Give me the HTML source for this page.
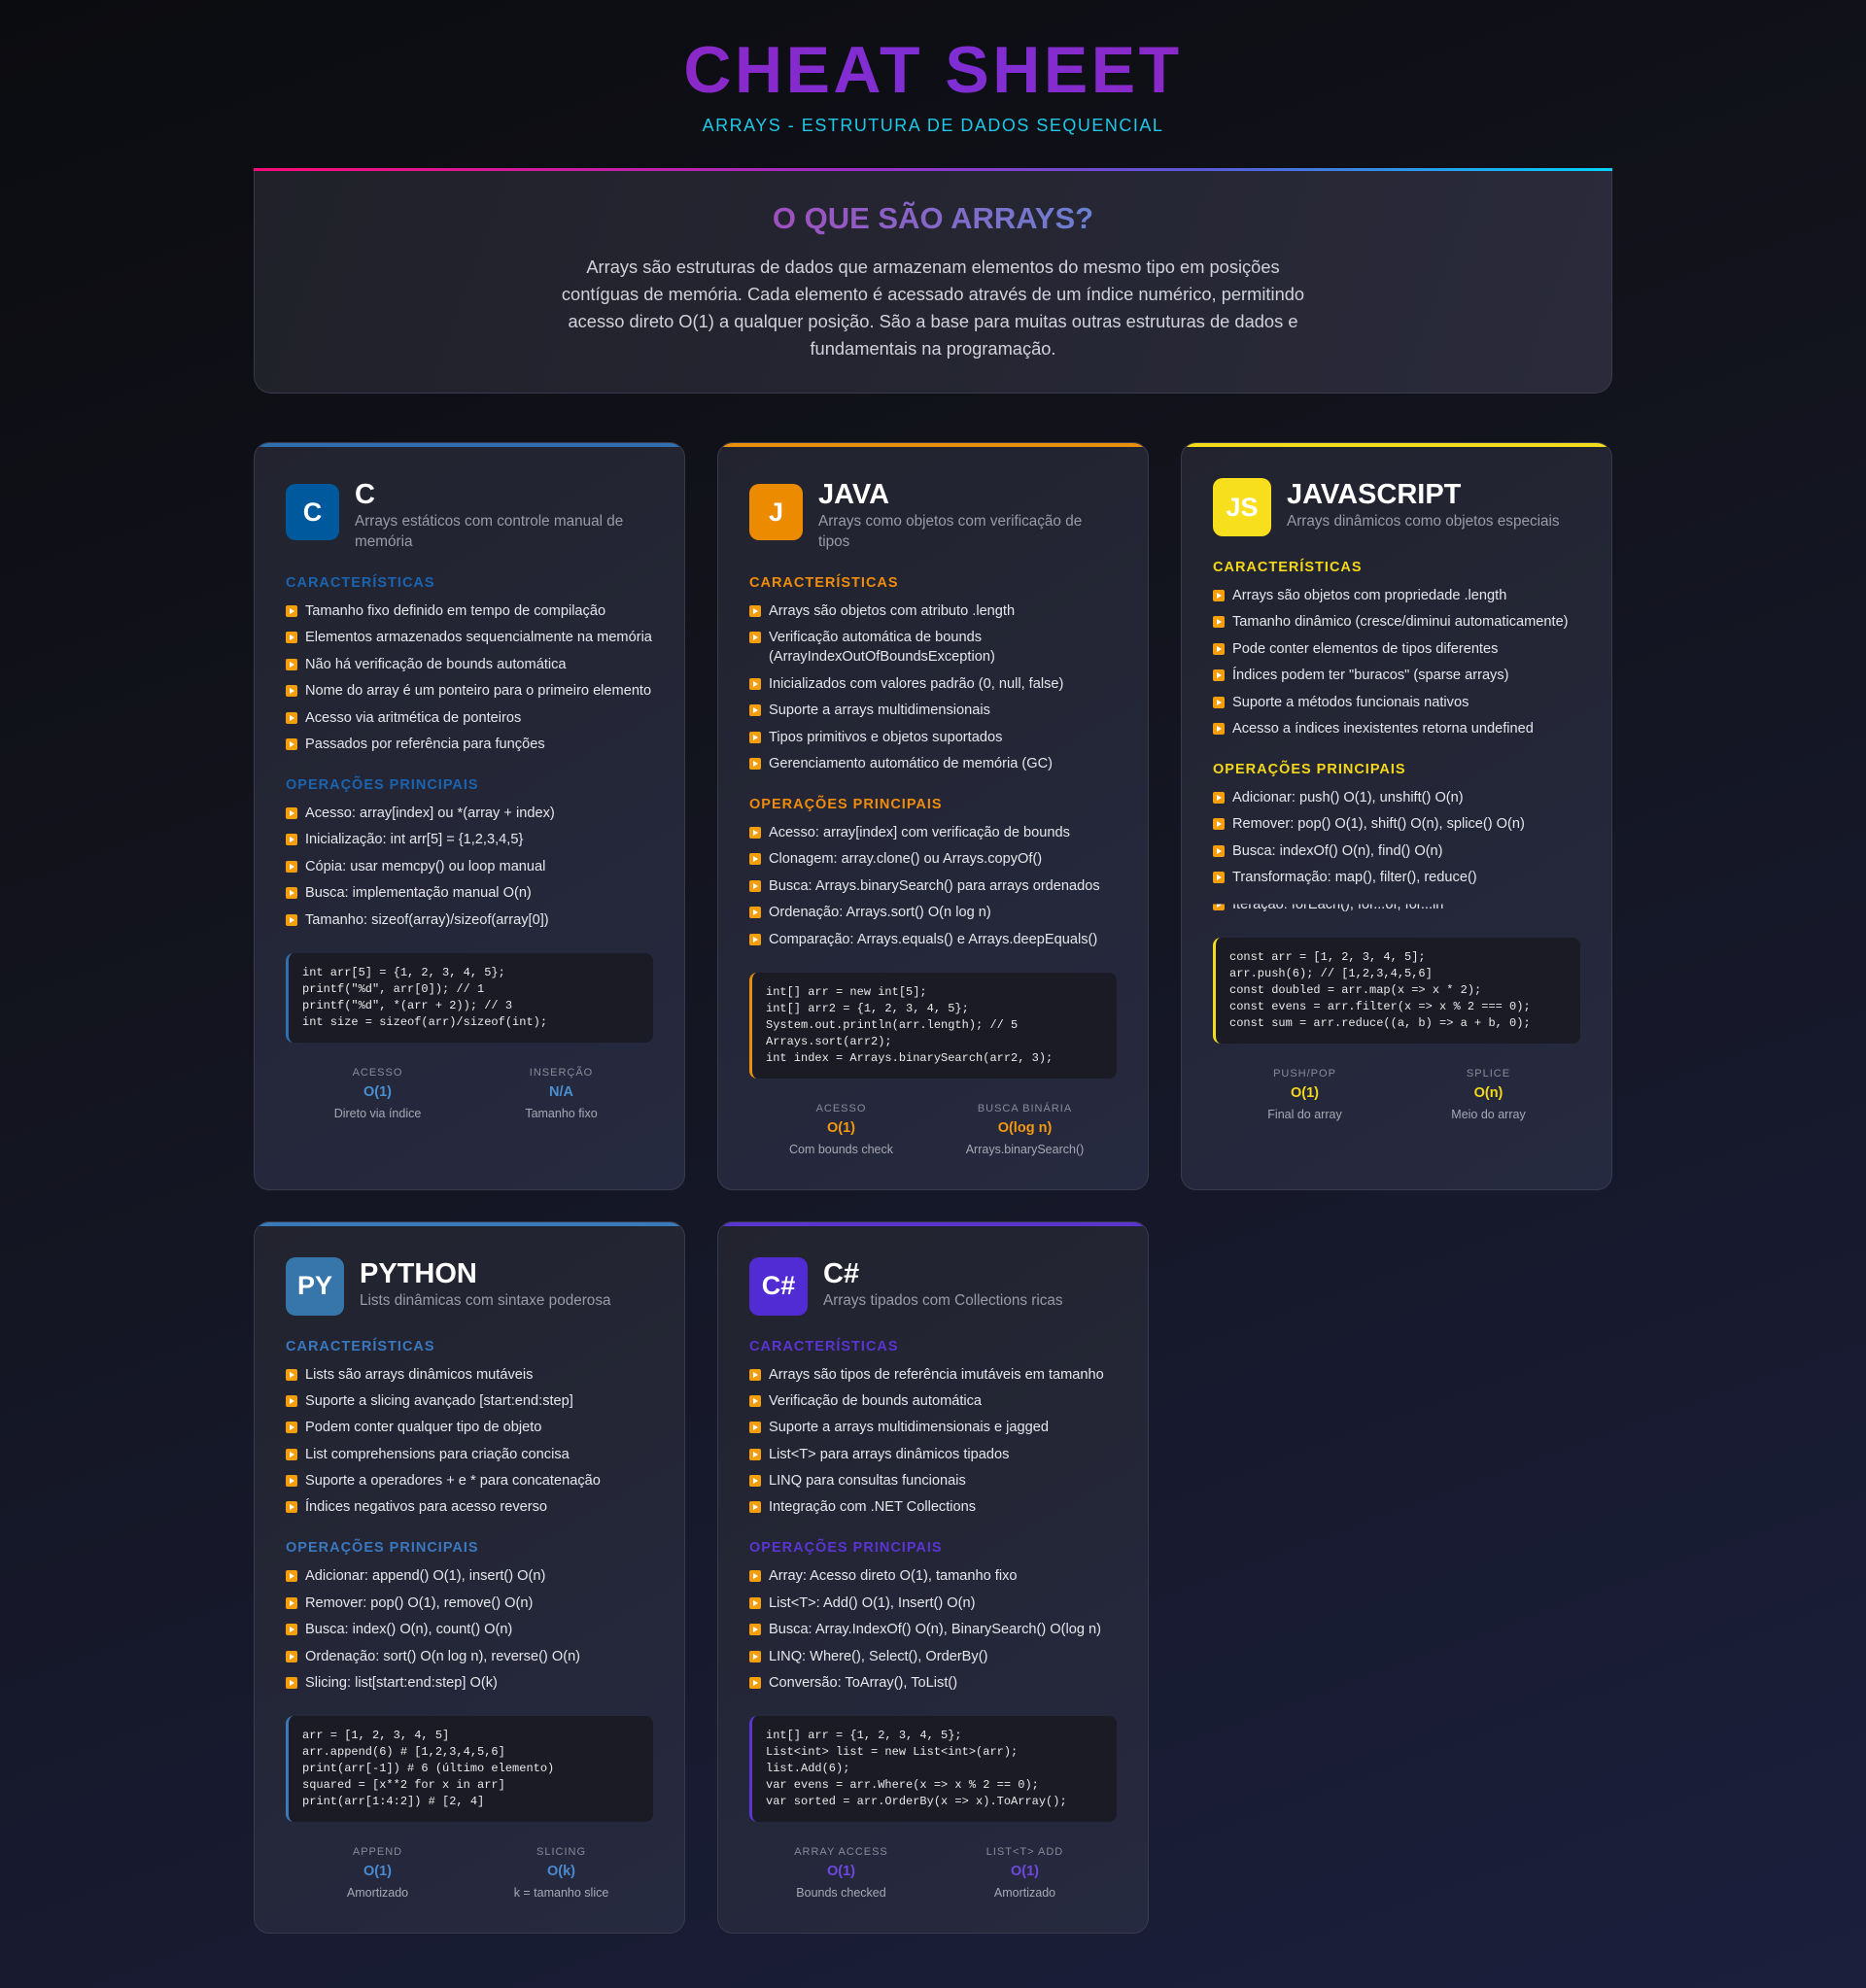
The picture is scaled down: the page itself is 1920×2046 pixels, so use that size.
<!DOCTYPE html>
<html><head><meta charset="utf-8">
<style>
*{box-sizing:border-box;margin:0;padding:0}
html,body{width:1920px;height:2046px;overflow:hidden}
body{font-family:"Liberation Sans",sans-serif;color:#e4e4ea;background:linear-gradient(160deg,#0b0c10 0%,#12131c 35%,#171a2e 70%,#1b1f3c 100%);}
.wrap{width:1398px;margin:0 auto;padding-top:34px}
h1{text-align:center;font-size:68px;font-weight:bold;letter-spacing:3.5px;line-height:76px;background:linear-gradient(90deg,#a21caf,#7e2fd6 50%,#a21caf);-webkit-background-clip:text;background-clip:text;color:transparent}
.sub{text-align:center;color:#1fc8e8;font-size:18px;letter-spacing:1.5px;line-height:22px;margin-top:8px;font-weight:500}
.intro{margin-top:33px;position:relative;border:1px solid #3a3b4a;border-top:none;border-radius:0 0 18px 18px;background:linear-gradient(110deg,#202129,#2a2a3b);height:232px;padding-top:32px;text-align:center}
.intro:before{content:"";position:absolute;left:-1px;right:-1px;top:0;height:3px;background:linear-gradient(90deg,#ff0a78,#9b2fc9 45%,#5a5ad8 70%,#00d4ff)}
.intro h2{font-size:31px;line-height:40px;font-weight:bold;display:inline-block;background:linear-gradient(90deg,#a04fbf,#6a80d0);-webkit-background-clip:text;background-clip:text;color:transparent}
.intro p{width:790px;margin:16px auto 0;font-size:18.3px;line-height:28px;color:#d2d2da}
.grid{display:grid;grid-template-columns:444px 444px 444px;column-gap:33px;row-gap:32px;margin-top:50px}
.card{position:relative;background:linear-gradient(150deg,#22232e,#262a40);border:1px solid #393b4d;border-radius:16px;padding:36px 32px 32px;overflow:hidden}
.card:before{content:"";position:absolute;left:0;right:0;top:0;height:4px;background:var(--b)}
.hd{display:flex;align-items:flex-start}
.ic{height:58px;min-width:55px;padding:0 9px;border-radius:10px;background:var(--i);display:flex;align-items:center;justify-content:center;font-weight:bold;font-size:27px;color:#fff;margin-top:6px;margin-right:16px}
.tt{font-size:29px;font-weight:bold;line-height:34px;color:#fff}
.ds{font-size:15.3px;line-height:21px;color:#9a9aa8}
.sec{font-size:14.5px;font-weight:bold;letter-spacing:1px;color:var(--h);line-height:20px;margin-top:22px}
ul{list-style:none;margin-top:9px}
li{position:relative;padding-left:20px;font-size:14.6px;line-height:20px;margin-bottom:7.4px;color:#e6e6ec}
li:before{content:"";position:absolute;left:0;top:4px;width:12px;height:12px;border-radius:2px;background:#f59e0b}
li:after{content:"";position:absolute;left:4px;top:7px;border-left:5px solid #fff;border-top:3px solid transparent;border-bottom:3px solid transparent}
.clip{clip-path:inset(10px 0 0 0)}
pre{margin-top:24px;background:#1a1b25;border-left:3px solid var(--b);border-radius:8px;padding:12px 14px;font-family:"Liberation Mono",monospace;font-size:12px;line-height:17px;color:#eaeaea}
.st{display:grid;grid-template-columns:1fr 1fr;margin-top:24px;text-align:center}
.st .l{font-size:11px;letter-spacing:1px;color:#8a8a98;line-height:14px}
.st .v{font-size:14.5px;font-weight:bold;color:var(--v);line-height:20px;margin-top:3px}
.st .d{font-size:12.5px;color:#a8a8b4;line-height:18px;margin-top:3px}
</style></head><body>
<div class="wrap">
<h1>CHEAT SHEET</h1>
<div class="sub">ARRAYS - ESTRUTURA DE DADOS SEQUENCIAL</div>
<div class="intro"><h2>O QUE SÃO ARRAYS?</h2>
<p>Arrays são estruturas de dados que armazenam elementos do mesmo tipo em posições contíguas de memória. Cada elemento é acessado através de um índice numérico, permitindo acesso direto O(1) a qualquer posição. São a base para muitas outras estruturas de dados e fundamentais na programação.</p></div>
<div class="grid">
<div class="card" style="--b:#2f6fb0;--i:#00599c;--h:#1a64b0;--v:#4a8fd0">
<div class="hd"><div class="ic">C</div><div><div class="tt">C</div><div class="ds">Arrays estáticos com controle manual de memória</div></div></div>
<div class="sec">CARACTERÍSTICAS</div>
<ul><li>Tamanho fixo definido em tempo de compilação</li><li>Elementos armazenados sequencialmente na memória</li><li>Não há verificação de bounds automática</li><li>Nome do array é um ponteiro para o primeiro elemento</li><li>Acesso via aritmética de ponteiros</li><li>Passados por referência para funções</li></ul>
<div class="sec">OPERAÇÕES PRINCIPAIS</div>
<ul><li>Acesso: array[index] ou *(array + index)</li><li>Inicialização: int arr[5] = {1,2,3,4,5}</li><li>Cópia: usar memcpy() ou loop manual</li><li>Busca: implementação manual O(n)</li><li>Tamanho: sizeof(array)/sizeof(array[0])</li></ul>
<pre>int arr[5] = {1, 2, 3, 4, 5};
printf("%d", arr[0]); // 1
printf("%d", *(arr + 2)); // 3
int size = sizeof(arr)/sizeof(int);</pre>
<div class="st"><div><div class="l">ACESSO</div><div class="v">O(1)</div><div class="d">Direto via índice</div></div><div><div class="l">INSERÇÃO</div><div class="v">N/A</div><div class="d">Tamanho fixo</div></div></div>
</div>
<div class="card" style="--b:#e8900c;--i:#ec8a00;--h:#f08c0c;--v:#f59a0c">
<div class="hd"><div class="ic">J</div><div><div class="tt">JAVA</div><div class="ds">Arrays como objetos com verificação de tipos</div></div></div>
<div class="sec">CARACTERÍSTICAS</div>
<ul><li>Arrays são objetos com atributo .length</li><li>Verificação automática de bounds (ArrayIndexOutOfBoundsException)</li><li>Inicializados com valores padrão (0, null, false)</li><li>Suporte a arrays multidimensionais</li><li>Tipos primitivos e objetos suportados</li><li>Gerenciamento automático de memória (GC)</li></ul>
<div class="sec">OPERAÇÕES PRINCIPAIS</div>
<ul><li>Acesso: array[index] com verificação de bounds</li><li>Clonagem: array.clone() ou Arrays.copyOf()</li><li>Busca: Arrays.binarySearch() para arrays ordenados</li><li>Ordenação: Arrays.sort() O(n log n)</li><li>Comparação: Arrays.equals() e Arrays.deepEquals()</li></ul>
<pre>int[] arr = new int[5];
int[] arr2 = {1, 2, 3, 4, 5};
System.out.println(arr.length); // 5
Arrays.sort(arr2);
int index = Arrays.binarySearch(arr2, 3);</pre>
<div class="st"><div><div class="l">ACESSO</div><div class="v">O(1)</div><div class="d">Com bounds check</div></div><div><div class="l">BUSCA BINÁRIA</div><div class="v">O(log n)</div><div class="d">Arrays.binarySearch()</div></div></div>
</div>
<div class="card" style="--b:#f2dc1c;--i:#f7df1e;--h:#f5d81a;--v:#f5d81a">
<div class="hd"><div class="ic" style="height:60px;min-width:60px;margin-top:0">JS</div><div><div class="tt">JAVASCRIPT</div><div class="ds">Arrays dinâmicos como objetos especiais</div></div></div>
<div class="sec">CARACTERÍSTICAS</div>
<ul><li>Arrays são objetos com propriedade .length</li><li>Tamanho dinâmico (cresce/diminui automaticamente)</li><li>Pode conter elementos de tipos diferentes</li><li>Índices podem ter "buracos" (sparse arrays)</li><li>Suporte a métodos funcionais nativos</li><li>Acesso a índices inexistentes retorna undefined</li></ul>
<div class="sec">OPERAÇÕES PRINCIPAIS</div>
<ul><li>Adicionar: push() O(1), unshift() O(n)</li><li>Remover: pop() O(1), shift() O(n), splice() O(n)</li><li>Busca: indexOf() O(n), find() O(n)</li><li>Transformação: map(), filter(), reduce()</li><li class="clip">Iteração: forEach(), for...of, for...in</li></ul>
<pre>const arr = [1, 2, 3, 4, 5];
arr.push(6); // [1,2,3,4,5,6]
const doubled = arr.map(x =&gt; x * 2);
const evens = arr.filter(x =&gt; x % 2 === 0);
const sum = arr.reduce((a, b) =&gt; a + b, 0);</pre>
<div class="st"><div><div class="l">PUSH/POP</div><div class="v">O(1)</div><div class="d">Final do array</div></div><div><div class="l">SPLICE</div><div class="v">O(n)</div><div class="d">Meio do array</div></div></div>
</div>
<div class="card" style="--b:#3a7ab8;--i:#3776ab;--h:#3a78c0;--v:#4a8ad0">
<div class="hd"><div class="ic" style="height:60px;min-width:60px;margin-top:0">PY</div><div><div class="tt">PYTHON</div><div class="ds">Lists dinâmicas com sintaxe poderosa</div></div></div>
<div class="sec">CARACTERÍSTICAS</div>
<ul><li>Lists são arrays dinâmicos mutáveis</li><li>Suporte a slicing avançado [start:end:step]</li><li>Podem conter qualquer tipo de objeto</li><li>List comprehensions para criação concisa</li><li>Suporte a operadores + e * para concatenação</li><li>Índices negativos para acesso reverso</li></ul>
<div class="sec">OPERAÇÕES PRINCIPAIS</div>
<ul><li>Adicionar: append() O(1), insert() O(n)</li><li>Remover: pop() O(1), remove() O(n)</li><li>Busca: index() O(n), count() O(n)</li><li>Ordenação: sort() O(n log n), reverse() O(n)</li><li>Slicing: list[start:end:step] O(k)</li></ul>
<pre>arr = [1, 2, 3, 4, 5]
arr.append(6) # [1,2,3,4,5,6]
print(arr[-1]) # 6 (último elemento)
squared = [x**2 for x in arr]
print(arr[1:4:2]) # [2, 4]</pre>
<div class="st"><div><div class="l">APPEND</div><div class="v">O(1)</div><div class="d">Amortizado</div></div><div><div class="l">SLICING</div><div class="v">O(k)</div><div class="d">k = tamanho slice</div></div></div>
</div>
<div class="card" style="--b:#5a36d0;--i:#512bd4;--h:#5a35d4;--v:#7048e0">
<div class="hd"><div class="ic" style="height:60px;min-width:60px;margin-top:0">C#</div><div><div class="tt">C#</div><div class="ds">Arrays tipados com Collections ricas</div></div></div>
<div class="sec">CARACTERÍSTICAS</div>
<ul><li>Arrays são tipos de referência imutáveis em tamanho</li><li>Verificação de bounds automática</li><li>Suporte a arrays multidimensionais e jagged</li><li>List&lt;T&gt; para arrays dinâmicos tipados</li><li>LINQ para consultas funcionais</li><li>Integração com .NET Collections</li></ul>
<div class="sec">OPERAÇÕES PRINCIPAIS</div>
<ul><li>Array: Acesso direto O(1), tamanho fixo</li><li>List&lt;T&gt;: Add() O(1), Insert() O(n)</li><li>Busca: Array.IndexOf() O(n), BinarySearch() O(log n)</li><li>LINQ: Where(), Select(), OrderBy()</li><li>Conversão: ToArray(), ToList()</li></ul>
<pre>int[] arr = {1, 2, 3, 4, 5};
List&lt;int&gt; list = new List&lt;int&gt;(arr);
list.Add(6);
var evens = arr.Where(x =&gt; x % 2 == 0);
var sorted = arr.OrderBy(x =&gt; x).ToArray();</pre>
<div class="st"><div><div class="l">ARRAY ACCESS</div><div class="v">O(1)</div><div class="d">Bounds checked</div></div><div><div class="l">LIST&lt;T&gt; ADD</div><div class="v">O(1)</div><div class="d">Amortizado</div></div></div>
</div>
</div>
</div>
</body></html>
